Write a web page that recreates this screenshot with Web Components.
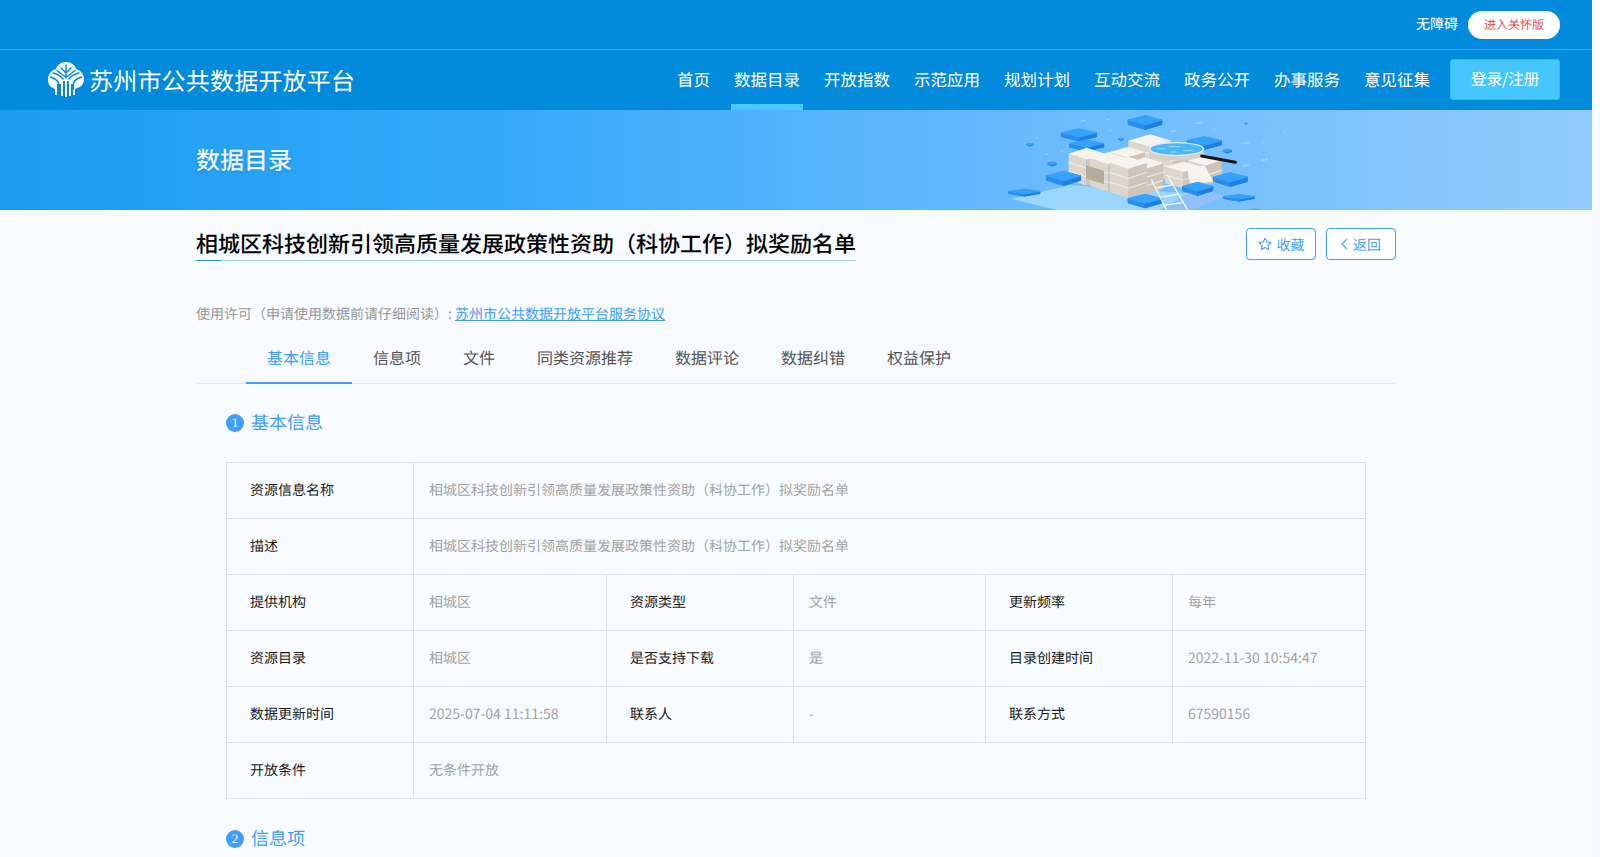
<!DOCTYPE html>
<html lang="zh-CN"><head><meta charset="utf-8"><title>数据目录</title>
<style>
html,body{margin:0;padding:0;height:857px;overflow:hidden;background:#f6f9fd}
body{font-family:"Noto Sans CJK SC","Noto Sans",sans-serif;font-size:14px;text-rendering:geometricPrecision}
#page{width:1592px;height:857px;overflow:hidden;background:#f8fbff}
</style></head><body>
<div id="page">
<site-header>
  <nav-item>首页</nav-item><nav-item active>数据目录</nav-item><nav-item>开放指数</nav-item><nav-item>示范应用</nav-item><nav-item>规划计划</nav-item><nav-item>互动交流</nav-item><nav-item>政务公开</nav-item><nav-item>办事服务</nav-item><nav-item>意见征集</nav-item>
</site-header>
<hero-banner>数据目录</hero-banner>
<page-body>
  <title-row>相城区科技创新引领高质量发展政策性资助（科协工作）拟奖励名单</title-row>
  <license-line></license-line>
  <tab-bar>
    <tab-item active>基本信息</tab-item><tab-item>信息项</tab-item><tab-item>文件</tab-item><tab-item>同类资源推荐</tab-item><tab-item>数据评论</tab-item><tab-item>数据纠错</tab-item><tab-item>权益保护</tab-item>
  </tab-bar>
  <detail-panel>
    <section-head num="1">基本信息</section-head>
    <info-table>
      <info-cell label>资源信息名称</info-cell><info-cell span="5">相城区科技创新引领高质量发展政策性资助（科协工作）拟奖励名单</info-cell>
      <info-cell label>描述</info-cell><info-cell span="5">相城区科技创新引领高质量发展政策性资助（科协工作）拟奖励名单</info-cell>
      <info-cell label>提供机构</info-cell><info-cell>相城区</info-cell><info-cell label>资源类型</info-cell><info-cell>文件</info-cell><info-cell label>更新频率</info-cell><info-cell>每年</info-cell>
      <info-cell label>资源目录</info-cell><info-cell>相城区</info-cell><info-cell label>是否支持下载</info-cell><info-cell>是</info-cell><info-cell label>目录创建时间</info-cell><info-cell>2022-11-30 10:54:47</info-cell>
      <info-cell label>数据更新时间</info-cell><info-cell>2025-07-04 11:11:58</info-cell><info-cell label>联系人</info-cell><info-cell>-</info-cell><info-cell label>联系方式</info-cell><info-cell>67590156</info-cell>
      <info-cell label>开放条件</info-cell><info-cell span="5">无条件开放</info-cell>
    </info-table>
    <section-head num="2" style="margin-top:27px">信息项</section-head>
  </detail-panel>
</page-body>
</div>
<script>
const FONT='"Noto Sans CJK SC","Noto Sans",sans-serif';
function def(name,html,init){
  customElements.define(name,class extends HTMLElement{
    constructor(){super();const r=this.attachShadow({mode:'open'});r.innerHTML=typeof html==='function'?html(this):html;}
    connectedCallback(){if(init)init(this);}
  });
}
def('site-header',`<style>
:host{display:block;background:#028bdc;color:#fff;font-family:${FONT}}
.top{height:49px;border-bottom:1px solid #3aa4e6;display:flex;justify-content:flex-end;align-items:center;padding-right:32px;gap:10px}
.acc{font-size:14px;line-height:20px;margin-top:-2px}
.pill{width:92px;height:28px;padding-bottom:2px;box-sizing:border-box;border-radius:14px;background:#fff;color:#e8503f;font-size:12px;display:flex;align-items:center;justify-content:center;margin-top:1px}
.main{height:60px;display:flex;align-items:stretch;padding:0 32px 0 48px}
.logo{display:flex;align-items:center;gap:5px;margin-right:auto;font-size:24px;font-weight:400;letter-spacing:.2px;white-space:nowrap}
.logo svg{display:block;margin-top:-2px}
.logo span{margin-top:-2px}
nav{display:flex;gap:18px;align-items:stretch}
.btn{width:110px;height:41px;margin:9px 0 0 17px;padding-bottom:3px;background:#45c6ff;border:1px solid #36b8f6;box-sizing:border-box;border-radius:3px;font-size:16px;letter-spacing:-.4px;display:flex;align-items:center;justify-content:center}
</style>
<div class="top"><span class="acc">无障碍</span><span class="pill">进入关怀版</span></div>
<div class="main"><div class="logo">
<svg width="36" height="35" viewBox="0 0 36 35">
<path fill="#fff" d="M18 0c5 0 9 3 10 7 4 1 8 5 8 10 0 5-3 8-7 9l-2 1V33h-2V22h-2v12h-2V19h-2v16h-2V19h-2v15h-2V22H9v11H7v-6l-2-1c-3-1-5-4-5-9 0-5 4-9 8-10 1-4 5-7 10-7z"/>
<g fill="none" stroke="#028bdc" stroke-width="1.500" stroke-linecap="round">
<path d="M18 3v13M18 11l-5-5M18 11l5-5M18 15.500l-9-7M18 15.500l9-7"/>
<path d="M2.500 15c3 1 7 3 8 6v6M33.500 15c-3 1-7 3-8 6v6M5 11c4 1 8 3 10 6M31 11c-4 1-8 3-10 6"/>
</g></svg>
<span>苏州市公共数据开放平台</span></div>
<nav><slot></slot></nav><div class="btn">登录/注册</div></div>`);
def('nav-item',`<style>
:host{display:flex;align-items:center;padding:0 3px 3px;font-size:16.500px;position:relative;color:#fff;white-space:nowrap}
:host([active])::after{content:"";position:absolute;left:0;right:0;bottom:0;height:6px;background:#4ac8ff}
</style><span><slot></slot></span>`);
const blocks=[[555,45,105,45],[357,85,107,40],[380,118,106,37],[733,108,106,42],[311,212,105,46],[811,216,105,45],[713,245,94,43],[555,281,105,44],[193,266,97,24],[837,282,95,23],[210,128,22,12],[276,184,28,16],[483,113,18,10],[802,146,28,15],[858,68,12,7],[885,326,50,18]];
function blk(cx,y,w,h){const side=h*.34,th=h-side,l=cx-w/2+1.5,r=cx+w/2-1.5,my=y+th/2;
 return `<g stroke-width="3" stroke-linejoin="round"><polygon fill="#2a8cec" stroke="#2a8cec" points="${l},${my} ${cx},${y+th} ${cx},${y+h-1.5} ${l},${my+side-1.5}"/><polygon fill="#1f7fe0" stroke="#1f7fe0" points="${r},${my} ${cx},${y+th} ${cx},${y+h-1.5} ${r},${my+side-1.5}"/><polygon fill="#36a1fb" stroke="#36a1fb" points="${cx},${y+1.5} ${r},${my} ${cx},${y+th} ${l},${my}"/></g>`}
function cube(cx,y,w,th,side,layers=3){const l=cx-w/2,r=cx+w/2,my=y+th/2;let seams='';
 for(let i=1;i<layers;i++){const d=side*i/layers;seams+=`M${l},${my+d} ${cx},${y+th+d} ${r},${my+d}`}
 return `<polygon fill="#ddd6cc" points="${l},${my} ${cx},${y+th} ${cx},${y+th+side} ${l},${my+side}"/><polygon fill="#cdc5b9" points="${r},${my} ${cx},${y+th} ${cx},${y+th+side} ${r},${my+side}"/><path d="${seams}" fill="none" stroke="#f7f4ef" stroke-width="2.500"/><polygon fill="#f6f2ed" points="${cx},${y} ${r},${my} ${cx},${y+th} ${l},${my}"/>`}
const dots=[[360,62,16,4],[440,58,10,3],[632,92,16,6],[710,68,16,5],[850,128,20,6],[905,178,18,6],[848,196,20,5],[905,125,10,3],[256,162,10,3],[300,152,10,3],[970,96,10,3],[225,112,8,3],[585,90,8,3],[450,90,8,3],[760,88,8,3],[930,75,8,2]];
const art=`<svg class="art" width="340" height="100" viewBox="0 30 1020 300" aria-hidden="true">
<polygon points="155,297 330,255 800,288 690,330 290,330" fill="#9bd6ff"/>
<polygon points="700,270 800,290 690,330 600,330" fill="#90bffb"/>
${dots.map(d=>`<rect x="${d[0]}" y="${d[1]}" width="${d[2]}" height="${d[3]}" fill="#8fdcff" opacity=".8" transform="rotate(-12 ${d[0]} ${d[1]})"/>`).join('')}
${blocks.slice(0,4).map(b=>blk(...b)).join('')}
${cube(570,103,130,38,60)}
${cube(500,142,110,30,60)}
${cube(640,150,130,34,60)}
${cube(735,165,102,32,60,2)}
${cube(670,185,110,30,50,2)}
${cube(380,143,108,36,78)}
${cube(445,157,112,36,82)}
${cube(555,172,110,36,76)}
${cube(505,170,110,36,88)}
<polygon fill="#b5aca0" points="378,196 432,212 432,252 378,236"/>
<polygon fill="#f6f3ee" points="680,200 735,198 760,245 690,250"/>
<ellipse cx="650" cy="160" rx="83" ry="22" fill="#d6d0c8"/>
<ellipse cx="650" cy="147" rx="83" ry="21" fill="#d7ecfb"/>
<ellipse cx="650" cy="147" rx="78" ry="17" fill="#4db7f7"/>
<path d="M590 147h25M625 140h35M670 152h30M630 156h20" stroke="#8edcff" stroke-width="3"/>
<line x1="725" y1="168" x2="826" y2="187" stroke="#1b1411" stroke-width="9" stroke-linecap="round"/>
${blocks.slice(4,7).map(b=>blk(...b)).join('')}
${blocks.slice(8).map(b=>blk(...b)).join('')}
${blk(...blocks[7])}
<g stroke="#f4f4f2" stroke-width="4" fill="none">
<path d="M574,238 622,335M622,225 686,335M587,264 640,254M600,292 655,282M612,316 668,308"/>
</g></svg>`;
def('hero-banner',`<style>
:host{display:block;height:100px;background:linear-gradient(90deg,#1a9df0 0%,#35a9f9 31%,#66b9fc 62%,#92cbfc 100%);position:relative;overflow:hidden}
.wrap{width:1200px;height:100px;margin:0 auto;display:flex;align-items:center}
.t{font:500 24px/32px ${FONT};color:#eaf5ff;text-shadow:0 1px 3px rgba(0,80,160,.25);margin-top:-3px}
.art{position:absolute;left:960px;top:0;display:block}
</style>${art}<div class="wrap"><div class="t"><slot></slot></div></div>`);
def('page-body',`<style>:host{display:block;width:1200px;margin:0 auto;font-family:${FONT}}</style><slot></slot>`);
def('title-row',`<style>
:host{display:flex;justify-content:space-between;align-items:flex-start;padding-top:18px}
h1{margin:0;font:500 22px/30px ${FONT};color:#000;border-bottom:1px solid #a8d2f8;position:relative;height:32px;white-space:nowrap}
h1::after{content:"";position:absolute;left:0;bottom:-1px;width:25px;height:1px;background:#2a8ff0}
.acts{display:flex;gap:10px}
.b{width:70px;height:32px;box-sizing:border-box;border:1px solid #409eff;border-radius:4px;background:#fff;color:#409eff;font-size:14px;display:flex;align-items:center;justify-content:center;gap:5px}
.b svg{display:block}
.b span{margin-top:1px}
</style><h1><slot></slot></h1><div class="acts">
<div class="b"><svg width="14" height="14" viewBox="0 0 14 14"><path fill="none" stroke="#409eff" stroke-width="1.100" stroke-linejoin="round" d="M7 1.200l1.800 3.800 4.100.5-3 2.900.8 4.100L7 10.500l-3.700 2 .8-4.100-3-2.900 4.100-.5z"/></svg><span>收藏</span></div>
<div class="b"><svg width="7" height="12" viewBox="0 0 7 12"><path fill="none" stroke="#409eff" stroke-width="1.100" d="M6 1L1 6l5 5"/></svg><span>返回</span></div></div>`);
def('license-line',`<style>
:host{display:block;margin-top:43px;font-size:14px;line-height:20px;color:#999;white-space:pre}
a{color:#409eff;text-decoration:underline}
</style>使用许可（申请使用数据前请仔细阅读）: <a>苏州市公共数据开放平台服务协议</a>`);
def('tab-bar',`<style>
:host{display:flex;height:50px;margin-top:9px;padding-left:50px;border-bottom:1px solid #e4e8ec}
</style><slot></slot>`);
def('tab-item',`<style>
:host{display:block;padding:0 21px;height:50px;line-height:48px;font-size:16px;font-weight:400;color:#555;position:relative;white-space:nowrap}
:host([active]){color:#409eff}
:host([active])::after{content:"";position:absolute;left:0;right:0;bottom:-1px;height:2px;background:#409eff}
</style><slot></slot>`);
def('detail-panel',`<style>:host{display:block;padding:26px 30px 0}</style><slot></slot>`);
def('section-head',h=>`<style>
:host{display:flex;align-items:center;gap:7px;height:26px;font-size:18px;color:#409eff}
i{width:18px;height:18px;border-radius:50%;background:#409eff;color:#fff;font:normal 13px/18px "Liberation Serif",serif;text-align:center;display:block}
span{margin-top:-2px}
</style><i>${h.getAttribute('num')}</i><span><slot></slot></span>`);
def('info-table',`<style>
:host{display:grid;grid-template-columns:187px 193px 187px 192px 187px 193px;grid-auto-rows:56px;margin:26px 0 0;width:1139px;border-left:1px solid #dfe1e4;border-top:1px solid #dfe1e4}
</style><slot></slot>`);
def('info-cell',`<style>
:host{display:flex;align-items:center;box-sizing:border-box;border-right:1px solid #dfe1e4;border-bottom:1px solid #dfe1e4;padding:0 0 2px 15px;font-size:14px;color:#a3a3a3;white-space:nowrap}
:host([label]){padding-left:23px;color:#1c1c1c}
</style><slot></slot>`,el=>{const s=el.getAttribute('span');if(s)el.style.gridColumn='span '+s;});
</script>
</body></html>
